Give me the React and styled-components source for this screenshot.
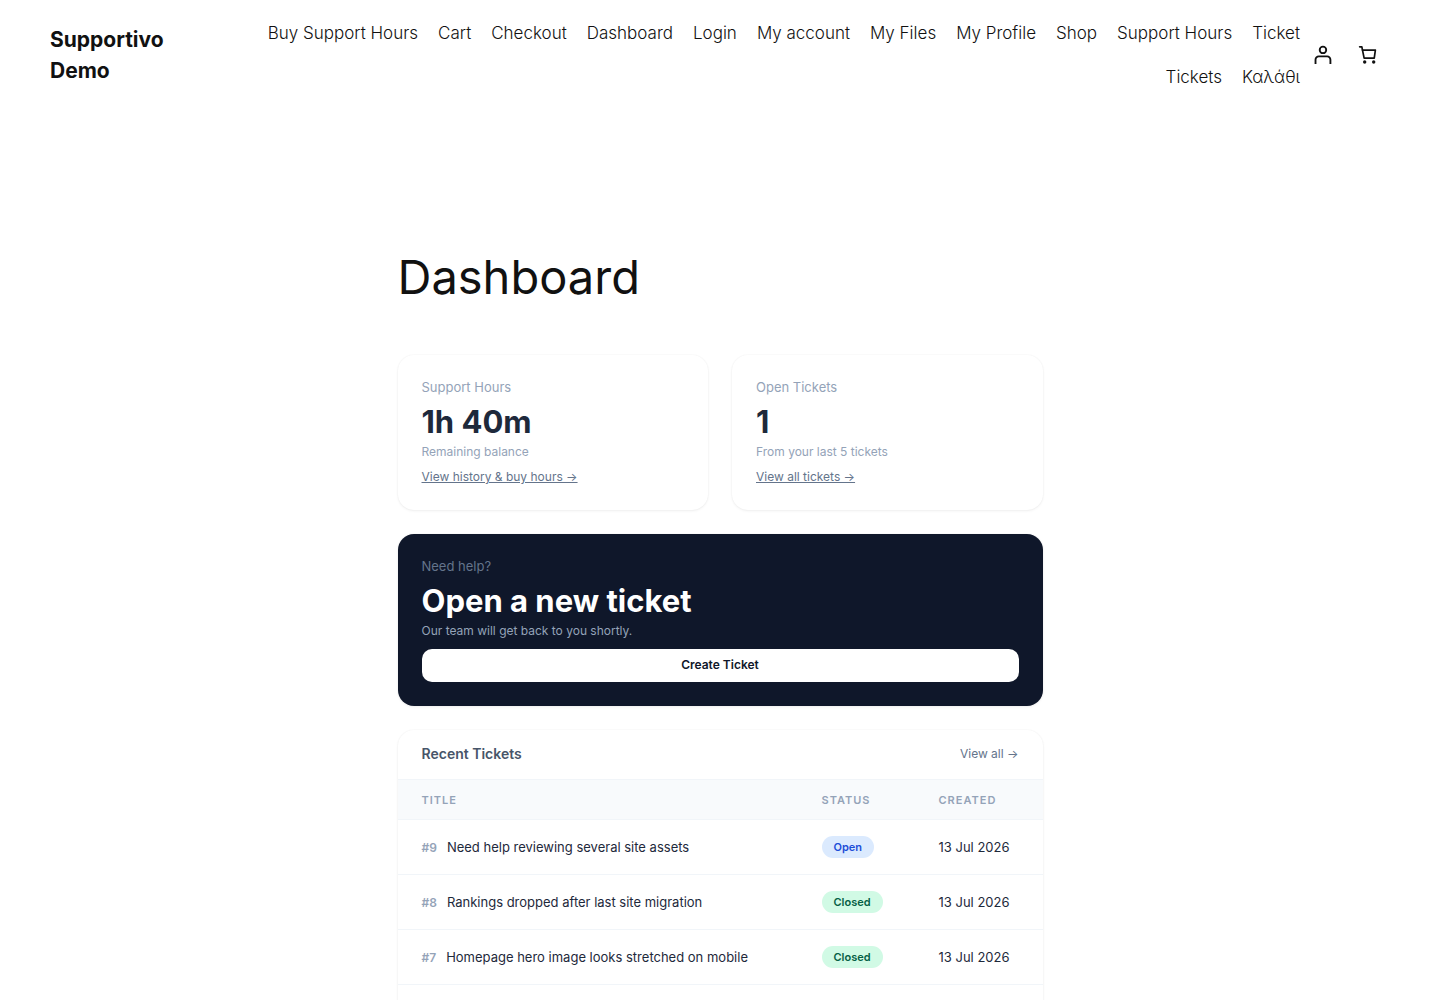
import React from "react";

//Styling
import styled, { createGlobalStyle } from "styled-components";

//Data
const links = [
  "Buy Support Hours",
  "Cart",
  "Checkout",
  "Dashboard",
  "Login",
  "My account",
  "My Files",
  "My Profile",
  "Shop",
  "Support Hours",
  "Ticket",
  "Tickets",
  "Καλάθι",
];

const tickets = [
  {
    id: 9,
    title: "Need help reviewing several site assets",
    status: "Open",
    created: "13 Jul 2026",
  },
  {
    id: 8,
    title: "Rankings dropped after last site migration",
    status: "Closed",
    created: "13 Jul 2026",
  },
  {
    id: 7,
    title: "Homepage hero image looks stretched on mobile",
    status: "Closed",
    created: "13 Jul 2026",
  },
];

//Icons
const AccountIcon = () => (
  <svg width="27" height="27" viewBox="1 2 29 29" aria-hidden="true">
    <circle
      cx="16"
      cy="10.5"
      r="3.5"
      stroke="currentColor"
      strokeWidth="2"
      fill="none"
    />
    <path
      fill="currentColor"
      d="M11.5 18.5H20.5C21.8807 18.5 23 19.6193 23 21V25.5H25V21C25 18.5147 22.9853 16.5 20.5 16.5H11.5C9.01472 16.5 7 18.5147 7 21V25.5H9V21C9 19.6193 10.1193 18.5 11.5 18.5Z"
    />
  </svg>
);

const CartIcon = () => (
  <svg
    width="27"
    height="27"
    viewBox="0 1 32 32"
    fill="currentColor"
    aria-hidden="true"
  >
    <circle cx="12.6667" cy="24.6667" r="2" />
    <circle cx="23.3333" cy="24.6667" r="2" />
    <path
      fillRule="evenodd"
      d="M9.28491 10.0356C9.47481 9.80216 9.75971 9.66667 10.0606 9.66667H25.3333C25.6232 9.66667 25.8989 9.79247 26.0888 10.0115C26.2787 10.2305 26.3643 10.5211 26.3233 10.8081L24.99 20.1414C24.9196 20.6341 24.4977 21 24 21H12C11.5261 21 11.1173 20.6674 11.0209 20.2034L9.08153 10.8701C9.02031 10.5755 9.09501 10.269 9.28491 10.0356ZM11.2898 11.6667L12.8136 19H23.1327L24.1803 11.6667H11.2898Z"
    />
    <path d="M5.66669 6.66667C5.66669 6.11438 6.1144 5.66667 6.66669 5.66667H9.33335C9.81664 5.66667 10.2308 6.01229 10.3172 6.48778L11.0445 10.4878C11.1433 11.0312 10.7829 11.5517 10.2395 11.6505C9.69614 11.7493 9.17555 11.3889 9.07676 10.8456L8.49878 7.66667H6.66669C6.1144 7.66667 5.66669 7.21895 5.66669 6.66667Z" />
  </svg>
);

const App = () => {
  return (
    <>
      <GlobalStyle />
      <Header>
        <Logo href="#">Supportivo Demo</Logo>
        <Nav>
          {links.map((link) => (
            <a href="#" key={link}>
              {link}
            </a>
          ))}
        </Nav>
        <Actions>
          <IconLink href="#" aria-label="My account">
            <AccountIcon />
          </IconLink>
          <IconButton type="button" aria-label="Cart">
            <CartIcon />
          </IconButton>
        </Actions>
      </Header>
      <Main>
        <PageTitle>Dashboard</PageTitle>
        <Cards>
          <Card>
            <Label>Support Hours</Label>
            <Value>1h 40m</Value>
            <Note>Remaining balance</Note>
            <CardLink href="#">View history &amp; buy hours →</CardLink>
          </Card>
          <Card>
            <Label>Open Tickets</Label>
            <Value>1</Value>
            <Note>From your last 5 tickets</Note>
            <CardLink href="#">View all tickets →</CardLink>
          </Card>
          <Card $dark>
            <Label $dark>Need help?</Label>
            <Value $dark>Open a new ticket</Value>
            <Note>Our team will get back to you shortly.</Note>
            <CreateButton type="button">Create Ticket</CreateButton>
          </Card>
          <TicketCard>
            <TicketHeader>
              <h2>Recent Tickets</h2>
              <a href="#">View all →</a>
            </TicketHeader>
            <Table>
              <thead>
                <tr>
                  <th>Title</th>
                  <th>Status</th>
                  <th>Created</th>
                </tr>
              </thead>
              <tbody>
                {tickets.map((ticket) => (
                  <tr key={ticket.id}>
                    <td>
                      <TicketId>#{ticket.id}</TicketId>
                      {ticket.title}
                    </td>
                    <td>
                      <Badge $open={ticket.status === "Open"}>
                        {ticket.status}
                      </Badge>
                    </td>
                    <td>{ticket.created}</td>
                  </tr>
                ))}
              </tbody>
            </Table>
          </TicketCard>
        </Cards>
      </Main>
    </>
  );
};

const GlobalStyle = createGlobalStyle`
  * {
    margin: 0;
    padding: 0;
    box-sizing: border-box;
  }
  body {
    background: #fff;
    color: #111;
    font-family: Inter, "Liberation Sans", sans-serif;
  }
  a {
    color: inherit;
    text-decoration: none;
  }
  button {
    font-family: inherit;
    border: none;
    cursor: pointer;
  }
`;

const Header = styled.header`
  display: flex;
  align-items: center;
  padding: 11px 50px 10px;
`;

const Logo = styled.a`
  width: 160px;
  flex-shrink: 0;
  padding-right: 40px;
  font-size: 21px;
  font-weight: 700;
  line-height: 31px;
`;

const Nav = styled.nav`
  flex: 1;
  display: flex;
  flex-wrap: wrap;
  justify-content: flex-end;
  column-gap: 20px;
  padding-left: 40px;
  font-size: 17px;
  font-weight: 300;
  line-height: 44px;
`;

const Actions = styled.div`
  display: flex;
  align-items: center;
  gap: 18px;
  padding: 0 9px;
`;

const IconLink = styled.a`
  display: flex;
`;

const IconButton = styled.button`
  display: flex;
  background: none;
  color: inherit;
`;

const Main = styled.main`
  width: 100%;
  max-width: 645px;
  margin: 0 auto;
  padding-top: 140px;
`;

const PageTitle = styled.h1`
  font-size: 47px;
  font-weight: 400;
  line-height: 56px;
  margin-bottom: 50px;
`;

const Cards = styled.div`
  display: grid;
  grid-template-columns: 1fr 1fr;
  gap: 24px;
`;

const Card = styled.section`
  display: flex;
  flex-direction: column;
  align-items: flex-start;
  padding: 24px;
  border-radius: 16px;
  background: ${(props) => (props.$dark ? "#0f172a" : "#fff")};
  box-shadow: 0 1px 3px rgba(0, 0, 0, 0.06), 0 0 2px rgba(0, 0, 0, 0.05);
  ${(props) => props.$dark && "grid-column: 1 / -1;"}
`;

const Label = styled.p`
  font-size: 13px;
  line-height: 16px;
  margin-bottom: 9px;
  color: ${(props) => (props.$dark ? "#64748b" : "#94a3b8")};
`;

const Value = styled.p`
  font-size: 31px;
  font-weight: 700;
  line-height: 36px;
  margin-bottom: 4px;
  color: ${(props) => (props.$dark ? "#fff" : "#1e293b")};
`;

const Note = styled.p`
  font-size: 12px;
  line-height: 16px;
  color: #94a3b8;
`;

const CardLink = styled.a`
  && {
    color: #64748b;
    text-decoration: underline;
  }
  margin-top: 8px;
  font-size: 12px;
  line-height: 18px;
`;

const CreateButton = styled.button`
  width: 100%;
  margin-top: 10px;
  padding: 7px 16px 9px;
  border-radius: 10px;
  background: #fff;
  color: #0f172a;
  font-size: 12px;
  font-weight: 600;
  line-height: 17px;
`;

const TicketCard = styled.section`
  grid-column: 1 / -1;
  padding-bottom: 32px;
  border-radius: 16px;
  background: #fff;
  box-shadow: 0 1px 3px rgba(0, 0, 0, 0.06), 0 0 2px rgba(0, 0, 0, 0.05);
  overflow: hidden;
`;

const TicketHeader = styled.div`
  display: flex;
  align-items: center;
  justify-content: space-between;
  padding: 13px 24px 15px;
  border-bottom: 1px solid #f1f5f9;
  h2 {
    font-size: 14px;
    font-weight: 600;
    line-height: 21px;
    color: #475569;
  }
  a {
    font-size: 12px;
    line-height: 18px;
    color: #64748b;
  }
`;

const Table = styled.table`
  width: 100%;
  border-collapse: separate;
  border-spacing: 0;
  th,
  td {
    padding: 0 24px;
    text-align: left;
    white-space: nowrap;
    border-bottom: 1px solid #f1f5f9;
  }
  th {
    height: 40px;
    background: #f8fafc;
    color: #94a3b8;
    font-size: 11px;
    font-weight: 600;
    letter-spacing: 1px;
    text-transform: uppercase;
  }
  th:nth-child(2) {
    width: 117px;
  }
  th:nth-child(3) {
    width: 128px;
  }
  td {
    height: 55px;
    color: #1e293b;
    font-size: 13px;
  }
`;

const TicketId = styled.span`
  margin-right: 10px;
  color: #94a3b8;
  font-size: 12px;
  font-weight: 600;
`;

const Badge = styled.span`
  display: inline-block;
  padding: 0 12px;
  border-radius: 11px;
  background: ${(props) => (props.$open ? "#dbeafe" : "#d1fae5")};
  color: ${(props) => (props.$open ? "#1d4ed8" : "#065f46")};
  font-size: 11px;
  font-weight: 600;
  line-height: 22px;
`;

export default App;
